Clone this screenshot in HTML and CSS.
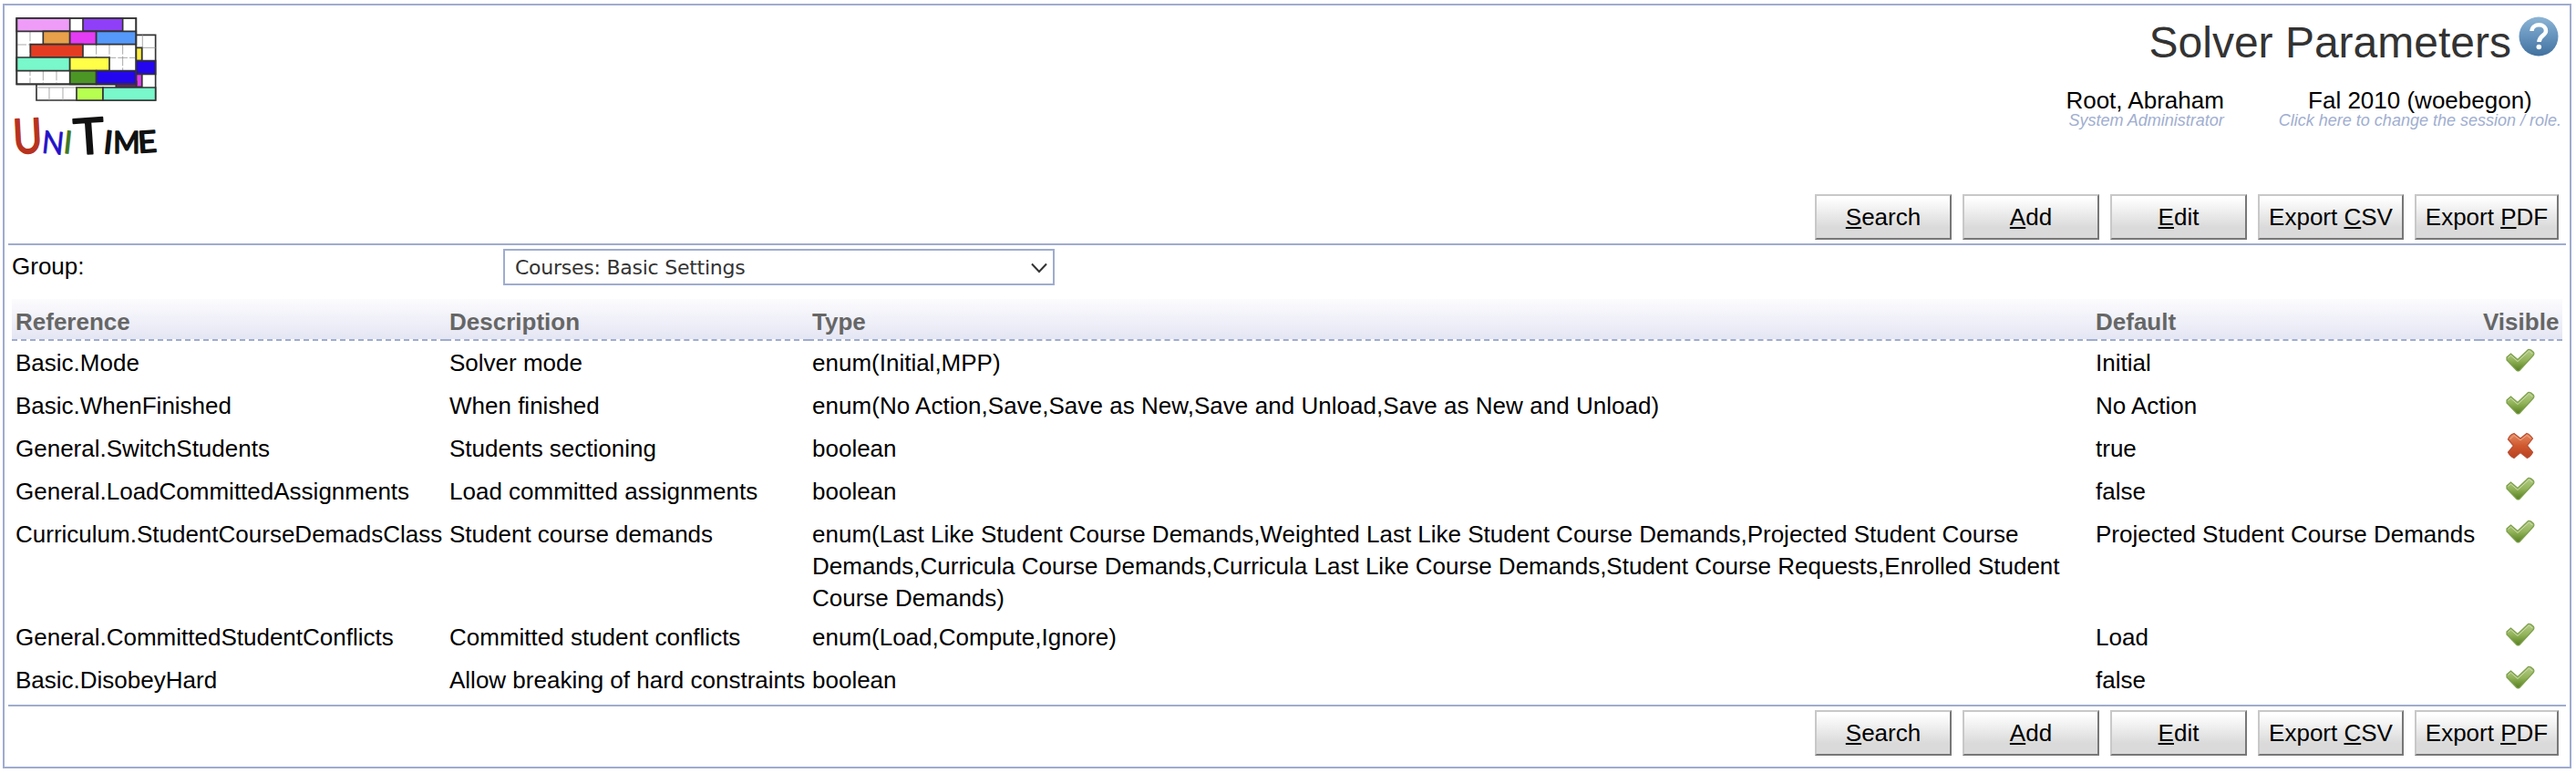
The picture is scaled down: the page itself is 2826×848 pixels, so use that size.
FILE: index.html
```html
<!DOCTYPE html>
<html lang="en">
<head>
<meta charset="utf-8">
<title>Solver Parameters</title>
<link rel="stylesheet" href="styles.css">
</head>
<body>
<svg class="defs" width="0" height="0" aria-hidden="true">
  <defs>
    <linearGradient id="green" x1="0" y1="0" x2="0" y2="1"><stop offset="0" stop-color="#b4cc88"/><stop offset=".5" stop-color="#93b45a"/><stop offset="1" stop-color="#557f20"/></linearGradient>
    <linearGradient id="red" x1="0" y1="0" x2="0" y2="1"><stop offset="0" stop-color="#e58a62"/><stop offset=".5" stop-color="#d0592f"/><stop offset="1" stop-color="#b8401f"/></linearGradient>
    <linearGradient id="blue" x1="0" y1="0" x2="0" y2="1"><stop offset="0" stop-color="#8db5d5"/><stop offset=".5" stop-color="#6593bd"/><stop offset="1" stop-color="#42719f"/></linearGradient>
    <symbol id="yes" viewBox="0 0 32 32"><path d="M1 13 L5.500 9 L13 15.500 L24.500 4.500 Q27 3.500 30.500 7.500 Q31.500 9.500 30 11 L15 27.500 Q13.500 28.500 12 27.500 L1 16 Z" fill="url(#green)" stroke="#7d9f4c" stroke-width="1.200"/><path d="M2.500 13.500 L5.500 11 L13 17.500 L25.500 6 L29 9" fill="none" stroke="#cddbb0" stroke-width="1"/></symbol>
    <symbol id="no" viewBox="0 0 32 32"><path d="M9 2.500 L16 8 L23 2.500 Q26 3 29.500 8 L23.500 16 L29.500 23 Q28 27 23.500 29.500 L16 23.500 L9 29.500 Q4 27 2.500 23 L8.500 16 L2.500 9 Q4 4 9 2.500 Z" fill="url(#red)" stroke="#b95034" stroke-width="1.200"/><path d="M4.500 9 L9 4.500 L16 10 L23 4.500 L27.500 8" fill="none" stroke="#efaa8a" stroke-width="1"/></symbol>
  </defs>
</svg>
<main class="frame">
  <header class="header">
    <svg class="logo" viewBox="40 50 490 480">
      <g stroke="#333" stroke-width="5">
        <path fill="#fff" d="M121 117H513V332H121Z"/>
        <path d="M470 117V290M450 159H513M163 290V332M208 290V332M121 290H253" stroke="#999" stroke-width="2.500" fill="none"/>
        <path fill="#fff040" d="M440 159H468V202H440Z"/><path fill="#2406ee" d="M440 202H513V246H440Z"/>
        <path fill="#e43cf5" d="M440 246H468V288H440Z"/><path fill="#9d16ae" d="M383 270H450V288H383Z"/>
        <path fill="#b6ff50" d="M253 290H340V332H253Z"/><path fill="#78f8cb" d="M340 290H513V332H340Z"/>
        <path fill="#fff" d="M56 62H449V279H56Z"/>
        <path d="M100 106V279M143 235V279M187 235V279M318 149V192M361 149V235M405 149V235M56 149H100M275 192H449" stroke="#999" stroke-width="2.500" stroke-dasharray="32 6" fill="none"/>
        <path fill="#ee9cf8" d="M56 62H231V105H56Z"/><path fill="#903ff8" d="M274 62H405V105H274Z"/>
        <path fill="#e8a04a" d="M143 105H231V148H143Z"/><path fill="#e43cf5" d="M231 105H318V148H231Z"/><path fill="#5599fa" d="M318 105H449V148H318Z"/>
        <path fill="#e43c22" d="M101 148H274V191H101Z"/>
        <path fill="#78f8cb" d="M56 191H231V235H56Z"/><path fill="#ffff48" d="M231 191H361V235H231Z"/>
        <path fill="#4c9626" d="M231 235H318V279H231Z"/><path fill="#2406ee" d="M318 235H449V279H318Z"/>
        <path fill="none" d="M56 62H449V279H56Z"/>
      </g>
      <g class="wordmark">
        <text class="w-red" x="44" y="506" font-size="158" textLength="96" lengthAdjust="spacingAndGlyphs" transform="rotate(-3 92 450)">U</text>
        <text class="w-blue" x="139" y="508" font-size="104" textLength="72" lengthAdjust="spacingAndGlyphs" transform="rotate(6 170 480)">N</text>
        <text class="w-green" x="210" y="507" font-size="104" transform="rotate(6 224 470)">I</text>
        <text class="w-black" x="243" y="509" font-size="164" textLength="102" lengthAdjust="spacingAndGlyphs" transform="rotate(-4 292 450)">T</text>
        <text class="w-black" x="343" y="507" font-size="104" transform="rotate(6 357 470)">I</text>
        <text class="w-black" x="374" y="507" font-size="100" textLength="88" lengthAdjust="spacingAndGlyphs">M</text>
        <text class="w-black" x="455" y="503" font-size="98" textLength="62" lengthAdjust="spacingAndGlyphs" transform="rotate(-4 487 470)">E</text>
      </g>
    </svg>
    <div class="heading">
      <div class="title-row">
        <h1 class="title">Solver Parameters</h1>
        <svg class="help" viewBox="0 0 44 44"><circle cx="22" cy="22" r="21.500" fill="url(#blue)"/><path d="M14.500 16 C15 7 30 7 30 16 C30 21 22.500 21 22.500 28" fill="none" stroke="#fff" stroke-width="4.500"/><circle cx="22.300" cy="33.500" r="2.800" fill="#fff"/></svg>
      </div>
      <div class="session">
        <div class="who"><div>Root, Abraham</div><div class="hint">System Administrator</div></div>
        <div class="term"><div>Fal 2010 (woebegon)</div><div class="hint">Click here to change the session / role.</div></div>
      </div>
    </div>
  </header>
  <div class="buttons top">
    <button class="btn"><u>S</u>earch</button><button class="btn"><u>A</u>dd</button><button class="btn"><u>E</u>dit</button><button class="btn csv">Export <u>C</u>SV</button><button class="btn pdf">Export <u>P</u>DF</button>
  </div>
  <section class="content">
    <div class="filter">
      <span class="label">Group:</span>
      <div class="select"><span>Courses: Basic Settings</span><svg class="chevron" viewBox="0 0 18 12"><path d="M1 1.500 L9 10 L17 1.500" fill="none" stroke="#333" stroke-width="2"/></svg></div>
    </div>
    <table class="params">
      <colgroup><col class="c-ref"><col class="c-desc"><col class="c-type"><col class="c-def"><col class="c-vis"></colgroup>
      <thead><tr><th>Reference</th><th>Description</th><th>Type</th><th>Default</th><th>Visible</th></tr></thead>
      <tbody>
        <tr><td>Basic.Mode</td><td>Solver mode</td><td>enum(Initial,MPP)</td><td>Initial</td><td class="vis"><svg class="icon"><use href="#yes"/></svg></td></tr>
        <tr><td>Basic.WhenFinished</td><td>When finished</td><td class="long">enum(No Action,Save,Save as New,Save and Unload,Save as New and Unload)</td><td>No Action</td><td class="vis"><svg class="icon"><use href="#yes"/></svg></td></tr>
        <tr><td>General.SwitchStudents</td><td>Students sectioning</td><td>boolean</td><td>true</td><td class="vis"><svg class="icon"><use href="#no"/></svg></td></tr>
        <tr><td>General.LoadCommittedAssignments</td><td>Load committed assignments</td><td>boolean</td><td>false</td><td class="vis"><svg class="icon"><use href="#yes"/></svg></td></tr>
        <tr><td>Curriculum.StudentCourseDemadsClass</td><td>Student course demands</td><td class="wrap">enum(Last Like Student Course Demands,Weighted Last Like Student Course Demands,Projected Student Course Demands,Curricula Course Demands,Curricula Last Like Course Demands,Student Course Requests,Enrolled Student Course Demands)</td><td>Projected Student Course Demands</td><td class="vis"><svg class="icon"><use href="#yes"/></svg></td></tr>
        <tr><td>General.CommittedStudentConflicts</td><td>Committed student conflicts</td><td>enum(Load,Compute,Ignore)</td><td>Load</td><td class="vis"><svg class="icon"><use href="#yes"/></svg></td></tr>
        <tr><td>Basic.DisobeyHard</td><td>Allow breaking of hard constraints</td><td>boolean</td><td>false</td><td class="vis"><svg class="icon"><use href="#yes"/></svg></td></tr>
      </tbody>
    </table>
  </section>
  <div class="buttons bottom">
    <button class="btn"><u>S</u>earch</button><button class="btn"><u>A</u>dd</button><button class="btn"><u>E</u>dit</button><button class="btn csv">Export <u>C</u>SV</button><button class="btn pdf">Export <u>P</u>DF</button>
  </div>
</main>
</body>
</html>
```
FILE: styles.css
```css
* { box-sizing: border-box; }
body {
  margin: 0;
  padding: 4px 5px 5px 3px;
  background: #fff;
  color: #000;
  font: 26px/35px "Liberation Sans", Arial, sans-serif;
}
.defs { display: block; height: 0; }
.frame {
  height: 839px;
  border: 2px solid #9facce;
  padding: 0 4px;
}
.header {
  display: flex;
  justify-content: space-between;
  height: 207px;
  padding: 10px 7px 0 4px;
}
.logo { width: 163.300px; height: 160px; overflow: visible; }
.wordmark { font-family: "Lato", sans-serif; stroke-width: 5px; stroke-linejoin: round; }
.w-red { fill: #b8321e; stroke: #b8321e; }
.w-blue { fill: #2410c8; stroke: #2410c8; stroke-width: 2px; }
.w-green { fill: #3c7820; stroke: #3c7820; stroke-width: 2px; }
.w-black { fill: #111; stroke: #111; }
.heading {
  display: flex;
  flex-direction: column;
  align-items: flex-end;
}
.title-row { display: flex; gap: 8px; padding: 2px 1px 0 0; }
.title {
  margin: 0;
  padding-top: 2px;
  font-size: 48px;
  line-height: 54px;
  font-weight: 400;
  color: #333;
}
.help { width: 44px; height: 44px; }
.session {
  display: flex;
  gap: 60px;
  margin-right: -2px;
  padding-top: 22px;
  line-height: 28px;
}
.who { text-align: right; }
.term { text-align: center; }
.hint {
  font-size: 18px;
  line-height: 16px;
  font-style: italic;
  color: #a0aed0;
}
.buttons {
  display: flex;
  justify-content: flex-end;
  gap: 12px;
  padding-right: 8px;
}
.btn {
  width: 150px;
  height: 50px;
  padding: 0 0 1px;
  border: 2px solid;
  border-color: #c8c8c8 #777 #777 #c8c8c8;
  background: linear-gradient(#fff 5%, #dadada 75%, #dadada);
  color: #000;
  font: 26px/30px "Liberation Sans", Arial, sans-serif;
  white-space: nowrap;
}
.btn u { text-decoration-thickness: 2px; text-underline-offset: 2px; }
.csv { width: 160px; }
.pdf { width: 158px; }
.top { padding-bottom: 4px; }
.bottom { padding-top: 4px; }
.content {
  border-top: 2px solid #9facce;
  border-bottom: 2px solid #9facce;
  padding: 4px 4px;
}
.filter { display: flex; height: 55px; }
.label { width: 539px; padding-top: 2px; }
.select {
  display: flex;
  align-items: center;
  justify-content: space-between;
  width: 605px;
  height: 40px;
  border: 2px solid #9facce;
  padding: 1px 6px 0 11px;
  font: 22px/30px "DejaVu Sans", Verdana, sans-serif;
  letter-spacing: -0.25px;
  color: #333;
}
.chevron { width: 18px; height: 12px; }
.params {
  width: 2798px;
  table-layout: fixed;
  border-collapse: separate;
  border-spacing: 0;
}
.c-ref { width: 476px; }
.c-desc { width: 398px; }
.c-type { width: 1408px; }
.c-def { width: 425px; }
.c-vis { width: 91px; }
.params th {
  height: 46px;
  padding: 8px 4px 1px;
  border-bottom: 2px dashed #9facce;
  background: linear-gradient(#fcfcfe, #e4e6f3);
  color: #666;
  text-align: left;
}
.params td {
  height: 47px;
  padding: 7px 4px 1px;
  vertical-align: top;
  white-space: nowrap;
}
.params td.long { letter-spacing: 0.04px; }
.params td.wrap { white-space: normal; }
.params td.vis { padding: 5px 5px 0 4px; text-align: center; }
.icon { display: block; width: 32px; height: 32px; margin: 0 auto; }
```
